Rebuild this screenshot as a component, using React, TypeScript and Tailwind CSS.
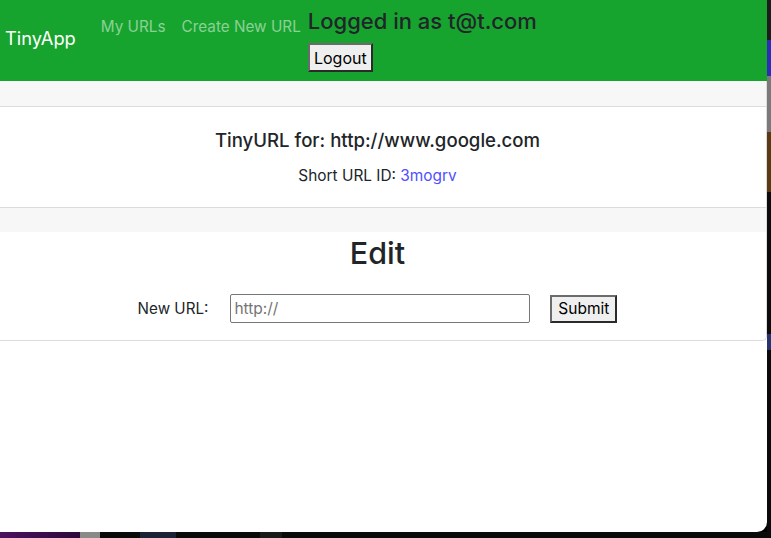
import React from 'react';

const font = { fontFamily: 'Inter, "Liberation Sans", sans-serif' };

const Nav = () => (
  <nav className="flex items-start h-[81px] bg-[#17a42e] shrink-0">
    <a className="ml-[5px] mt-[26px] text-[18.3px] leading-6 text-white">TinyApp</a>
    <a className="ml-[25px] mt-[15px] text-[15.3px] leading-6 text-[#8bd196]">My URLs</a>
    <a className="ml-4 mt-[15px] text-[15.3px] leading-6 text-[#8bd196]">Create New URL</a>
    <div className="ml-[7px] mt-[6px] flex flex-col items-start">
      <h4 className="text-[22px] leading-[30px] font-medium text-[#212529]">Logged in as t@t.com</h4>
      <button className="mt-[7px] h-[29px] w-[65px] bg-[#efefef] border-2 border-[#6b6b6b] border-r-[#2a2a2a] border-b-[#2a2a2a] text-[16px] text-black leading-none">
        Logout
      </button>
    </div>
  </nav>
);

const SideStrip = () => (
  <div className="flex flex-col w-[4px] h-full bg-[#111]">
    <div className="h-[40px] bg-[#1c1c1c]" />
    <div className="h-[36px] bg-[#2c2cb8]" />
    <div className="h-[56px] bg-[#7a7a7a]" />
    <div className="h-[60px] bg-[#5a3a12]" />
    <div className="h-[142px] bg-[#0c0c0c]" />
    <div className="h-[16px] bg-[#28336e]" />
    <div className="flex-1 bg-[#0a0a0a]" />
  </div>
);

const BottomStrip = () => (
  <div className="flex h-[6px] bg-[#0a0a0a] shrink-0">
    <div className="w-[80px] bg-gradient-to-r from-[#4a1260] to-[#2c0a3c]" />
    <div className="w-[20px] bg-[#8a8a8a]" />
    <div className="ml-[40px] w-[36px] bg-[#1a2233]" />
    <div className="ml-[84px] w-[22px] bg-[#1a1a1a]" />
  </div>
);

export default function App() {
  return (
    <div className="w-[771px] h-[538px] bg-black flex flex-col overflow-hidden" style={font}>
      <div className="flex flex-1 min-h-0">
        <div className="w-[767px] h-full bg-white rounded-br-[10px] overflow-hidden flex flex-col">
          <Nav />
          <div className="-ml-[11px] w-[778px] flex flex-col text-center text-[#212529] border-r border-b border-[#dcdcdc] rounded-br-[5px]">
            <div className="h-[26px] bg-[#f7f7f7] border-b border-[#dcdcdc]" />
            <div className="h-[100px] flex flex-col items-center">
              <h5 className="mt-[21px] text-[18.6px] leading-[24px] font-medium">TinyURL for: http://www.google.com</h5>
              <p className="mt-3 text-[15.4px] leading-6">
                Short URL ID: <a className="text-[#4f4fff]">3mogrv</a>
              </p>
            </div>
            <div className="h-[25px] bg-[#f7f7f7] border-t border-[#dcdcdc]" />
            <div className="h-[108px] flex flex-col items-center">
              <h2 className="mt-[2px] text-[30.5px] leading-[38px] font-medium">Edit</h2>
              <form className="mt-[22px] flex items-center">
                <label className="text-[15.2px] leading-6">New URL:</label>
                <input
                  className="ml-[22px] w-[300px] h-[29px] border border-[#767676] rounded-[2px] px-[3px] text-[15.5px] placeholder:text-[#757575] outline-none"
                  placeholder="http://"
                />
                <button
                  type="button"
                  className="ml-[20px] h-[28px] w-[67px] bg-[#efefef] border-2 border-[#6b6b6b] border-r-[#2a2a2a] border-b-[#2a2a2a] text-[15.5px] text-black leading-none"
                >
                  Submit
                </button>
              </form>
            </div>
          </div>
        </div>
        <SideStrip />
      </div>
      <BottomStrip />
    </div>
  );
}
